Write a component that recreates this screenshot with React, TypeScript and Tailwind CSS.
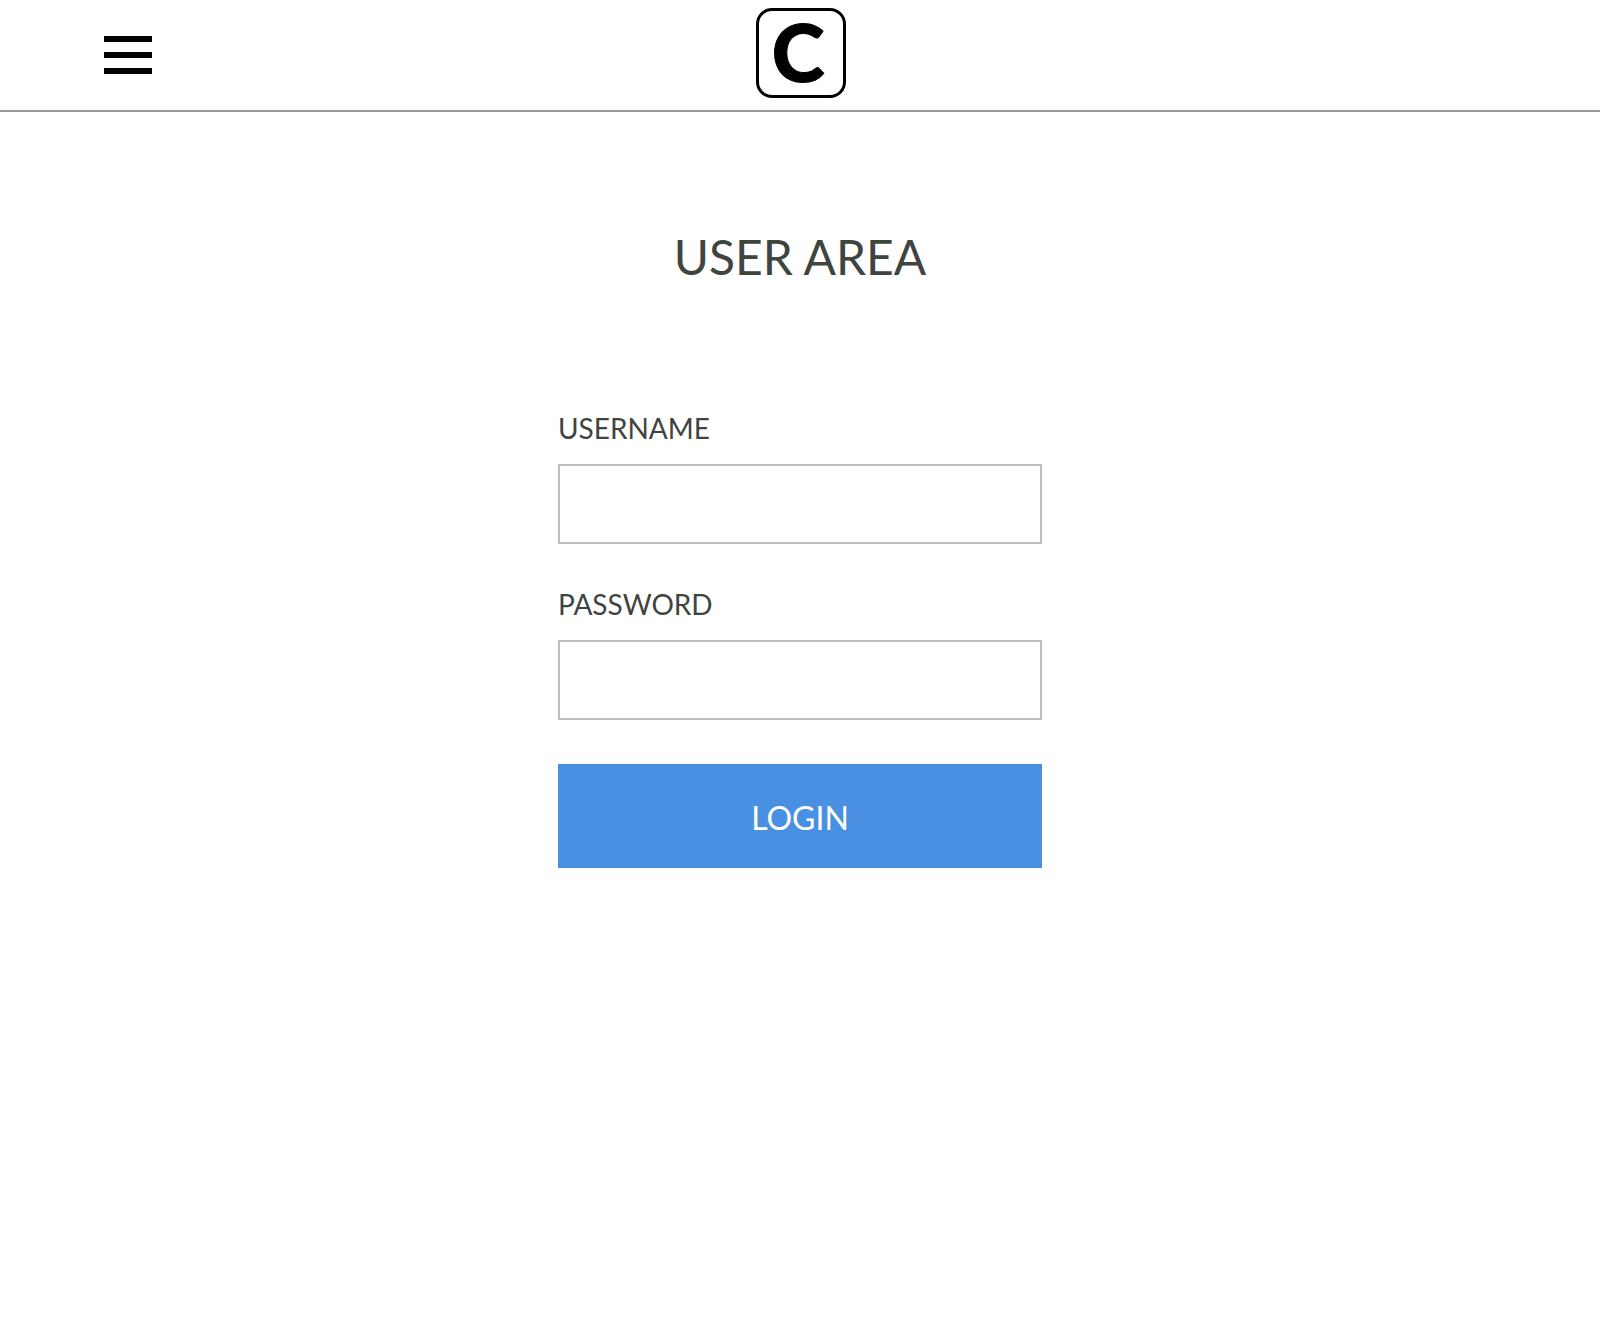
import React from "react";

function Field({ id, label, type }: { id: string; label: string; type: string }) {
  return (
    <div className="mb-11 flex flex-col">
      <label htmlFor={id} className="mb-5 text-[28px] leading-8">
        {label}
      </label>
      <input
        id={id}
        name={id}
        type={type}
        className="h-20 w-full border-2 border-[#bebebe] bg-white px-4 text-[28px] outline-none"
      />
    </div>
  );
}

export default function App() {
  return (
    <div className="min-h-screen bg-white font-['Lato',sans-serif] text-[#40443f]">
      <header className="grid grid-cols-[1fr_auto_1fr] items-start border-b-2 border-[#979797] pt-2 pr-[102px] pb-3 pl-[104px]">
        <button type="button" aria-label="Menu" className="mt-7 flex w-12 flex-col gap-2.5">
          <span className="h-1.5 w-full bg-black" />
          <span className="h-1.5 w-full bg-black" />
          <span className="h-1.5 w-full bg-black" />
        </button>
        <a
          href="#"
          className="flex size-[90px] items-center justify-center rounded-[16px] border-3 border-black pr-1.5 pb-1 text-[80px] leading-none font-black text-black [-webkit-text-stroke:1px_black]"
        >
          C
        </a>
      </header>
      <main className="mx-auto flex w-full max-w-[484px] flex-col pt-28">
        <h1 className="text-center text-5xl leading-[66px]">USER AREA</h1>
        <form className="mt-[122px] flex flex-col" onSubmit={(e) => e.preventDefault()}>
          <Field id="username" label="USERNAME" type="text" />
          <Field id="password" label="PASSWORD" type="password" />
          <button type="submit" className="h-[104px] w-full bg-[#4990e2] pt-1 text-[32px] text-white">
            LOGIN
          </button>
        </form>
      </main>
    </div>
  );
}
